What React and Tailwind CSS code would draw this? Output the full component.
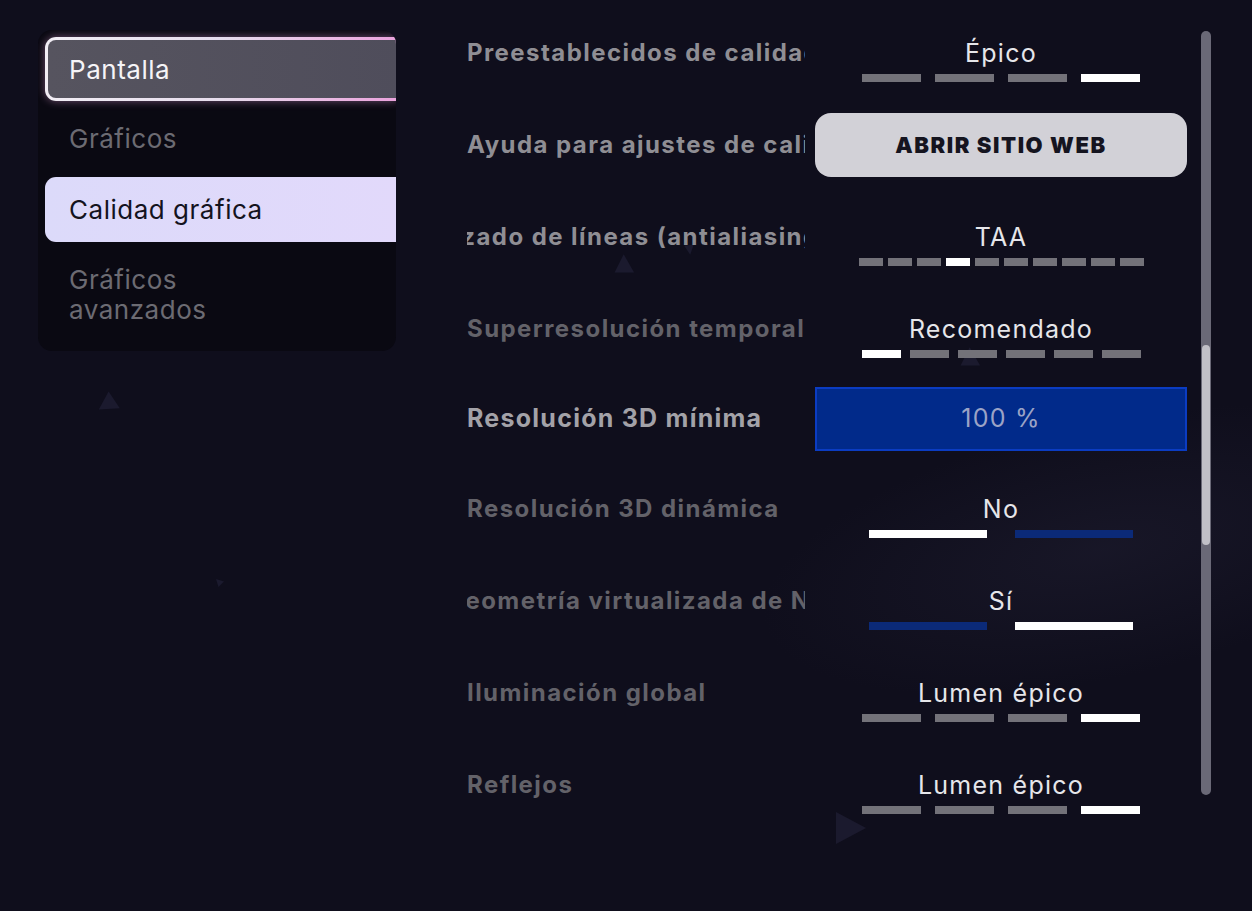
import React from 'react';

// fuente base para toda la pantalla de ajustes
const FONT = { fontFamily: 'Inter, "Noto Sans", sans-serif' };

const NAV = [
  { id: 'pantalla', label: 'Pantalla', state: 'focus' },
  { id: 'graficos', label: 'Gráficos', state: 'idle' },
  { id: 'calidad', label: 'Calidad gráfica', state: 'active' },
  { id: 'avanzados', label: 'Gráficos avanzados', state: 'idle' },
];

const SETTINGS = [
  { label: 'Preestablecidos de calidad', tone: 'bright', kind: 'seg', value: 'Épico', count: 4, active: 3, size: 'quad' },
  { label: 'Ayuda para ajustes de calidad', tone: 'bright', kind: 'button', value: 'ABRIR SITIO WEB' },
  { label: 'Suavizado de líneas (antialiasing)', tone: 'bright', kind: 'seg', value: 'TAA', count: 10, active: 3, size: 'tiny', shift: 'ml-[-78px]' },
  { label: 'Superresolución temporal', tone: 'dim', kind: 'seg', value: 'Recomendado', count: 6, active: 0, size: 'six' },
  { label: 'Resolución 3D mínima', tone: 'hot', kind: 'box', value: '100 %' },
  { label: 'Resolución 3D dinámica', tone: 'dim', kind: 'toggle', value: 'No', on: false },
  { label: 'Geometría virtualizada de Nanite', tone: 'dim', kind: 'toggle', value: 'Sí', on: true, shift: 'ml-[-21px]' },
  { label: 'Iluminación global', tone: 'dim', kind: 'seg', value: 'Lumen épico', count: 4, active: 3, size: 'quad' },
  { label: 'Reflejos', tone: 'dim', kind: 'seg', value: 'Lumen épico', count: 4, active: 3, size: 'quad' },
];

const SEG_SIZES = {
  quad: { bar: 'w-[59px]', gap: 'gap-[14px]' },
  six: { bar: 'w-[39px]', gap: 'gap-[9px]' },
  tiny: { bar: 'w-[24px]', gap: 'gap-[5px]' },
};

const TONES = {
  bright: 'text-[24px] tracking-[0.06em] text-[#8f8e94]',
  dim: 'text-[24px] tracking-[0.06em] text-[#636269]',
  hot: 'text-[25px] tracking-[0.05em] text-[#a3a2a8]',
};

function NavItem({ item }) {
  if (item.state === 'focus') {
    return (
      <div className="rounded-l-[11px] bg-gradient-to-r from-[#f1edf4] via-[#e6dcec] to-[#e9a2dc] p-[3px] pr-0 shadow-[0_0_8px_rgba(231,160,220,0.45)]">
        <div className="flex h-[58px] items-center rounded-l-[8px] bg-gradient-to-r from-[#56545f] to-[#4f4d5b] pl-[21px] text-[26px] tracking-[0.02em] text-[#f5f4f7]">
          {item.label}
        </div>
      </div>
    );
  }
  if (item.state === 'active') {
    return (
      <div className="flex h-[65px] items-center rounded-l-[11px] bg-gradient-to-r from-[#dcdafa] to-[#e2d9fb] pl-[24px] text-[26px] tracking-[0.02em] text-[#14131e]">
        {item.label}
      </div>
    );
  }
  return (
    <div className="flex min-h-[65px] items-center py-[18px] pl-[24px] pr-[120px] text-[26px] leading-[30px] tracking-[0.02em] text-[#6c6b72]">
      {item.label}
    </div>
  );
}

function Segments({ count, active, size }) {
  const s = SEG_SIZES[size];
  return (
    <div className={`mt-[6px] flex ${s.gap}`}>
      {Array.from({ length: count }).map((_, i) => (
        <div key={i} className={`h-[8px] ${s.bar} ${i === active ? 'bg-white' : 'bg-[#737279]'}`} />
      ))}
    </div>
  );
}

function ValueCell({ row }) {
  if (row.kind === 'button') {
    return (
      <div className="flex h-full w-[372px] items-center">
        <div className="flex h-[64px] w-full items-center justify-center rounded-[16px] bg-[#d2d1d7] text-[22px] font-black tracking-[0.07em] text-[#15141f]">
          {row.value}
        </div>
      </div>
    );
  }
  if (row.kind === 'box') {
    return (
      <div className="flex h-full w-[372px] items-center">
        <div className="flex h-[64px] w-full items-center justify-center border-2 border-[#0b3cc2] bg-[#012a8a] text-[25px] tracking-[0.05em] text-[#9ba3c6]">
          {row.value}
        </div>
      </div>
    );
  }
  return (
    <div className="flex w-[372px] flex-col items-center pt-[31px]">
      <div className="h-[30px] text-[25px] leading-[30px] tracking-[0.05em] text-[#e6e6ea]">{row.value}</div>
      {row.kind === 'seg' ? (
        <Segments count={row.count} active={row.active} size={row.size} />
      ) : (
        <div className="mt-[6px] flex gap-[28px]">
          <div className={`h-[8px] w-[118px] ${row.on ? 'bg-[#0b2a78]' : 'bg-white'}`} />
          <div className={`h-[8px] w-[118px] ${row.on ? 'bg-white' : 'bg-[#0b2a78]'}`} />
        </div>
      )}
    </div>
  );
}

function SettingRow({ row }) {
  const tall = row.kind === 'box' ? 'h-[88px]' : 'h-[92px]';
  return (
    <div className={`flex ${tall} gap-[10px]`}>
      <div className="flex h-full w-[338px] items-center overflow-hidden whitespace-nowrap">
        <span className={`${row.shift || ''} font-bold ${TONES[row.tone]}`}>
          {row.label}
        </span>
      </div>
      <ValueCell row={row} />
    </div>
  );
}

function Tri({ className, points }) {
  return (
    <svg className={`pointer-events-none absolute ${className}`} viewBox="0 0 40 40">
      <polygon points={points} fill="#1b1a2e" />
    </svg>
  );
}

export default function App() {
  return (
    <div className="relative h-[911px] w-[1252px] overflow-hidden bg-[#0f0e1c]" style={FONT}>
      {/* decoración de fondo */}
      <div className="pointer-events-none absolute right-[-200px] top-[420px] h-[260px] w-[700px] rotate-[-12deg] bg-[radial-gradient(ellipse_at_center,rgba(40,38,60,0.35),transparent_70%)]" />
      <Tri className="left-[96px] top-[390px] h-[28px] w-[28px]" points="18,2 34,26 4,28" />
      <Tri className="left-[612px] top-[253px] h-[26px] w-[26px]" points="18,2 34,30 4,30" />
      <Tri className="left-[683px] top-[244px] h-[12px] w-[12px]" points="4,6 36,2 24,36" />
      <Tri className="left-[958px] top-[346px] h-[26px] w-[26px]" points="18,2 34,30 4,30" />
      <Tri className="left-[830px] top-[808px] h-[40px] w-[40px]" points="6,4 36,20 6,36" />
      <Tri className="left-[215px] top-[578px] h-[10px] w-[10px]" points="4,4 36,14 14,36" />

      <div className="relative flex">
        {/* menú lateral */}
        <div className="ml-[38px] mt-[30px] w-[358px] self-start overflow-hidden rounded-[14px] bg-[#0a0912] pb-[8px] pl-[7px] pt-[7px]">
          <div className="mr-[-1px] flex flex-col gap-[5px]">
            {NAV.map((n) => (
              <NavItem key={n.id} item={n} />
            ))}
          </div>
        </div>

        {/* lista de ajustes */}
        <div className="ml-[71px] pt-[7px]">
          {SETTINGS.map((row) => (
            <SettingRow key={row.label} row={row} />
          ))}
        </div>

        {/* barra de desplazamiento */}
        <div className="ml-[14px] mt-[31px] h-[764px] w-[10px] rounded-full bg-[#6a6977] px-[1px] pt-[314px]">
          <div className="h-[200px] w-[8px] rounded-full bg-[#c1c0c7]" />
        </div>
      </div>
    </div>
  );
}
